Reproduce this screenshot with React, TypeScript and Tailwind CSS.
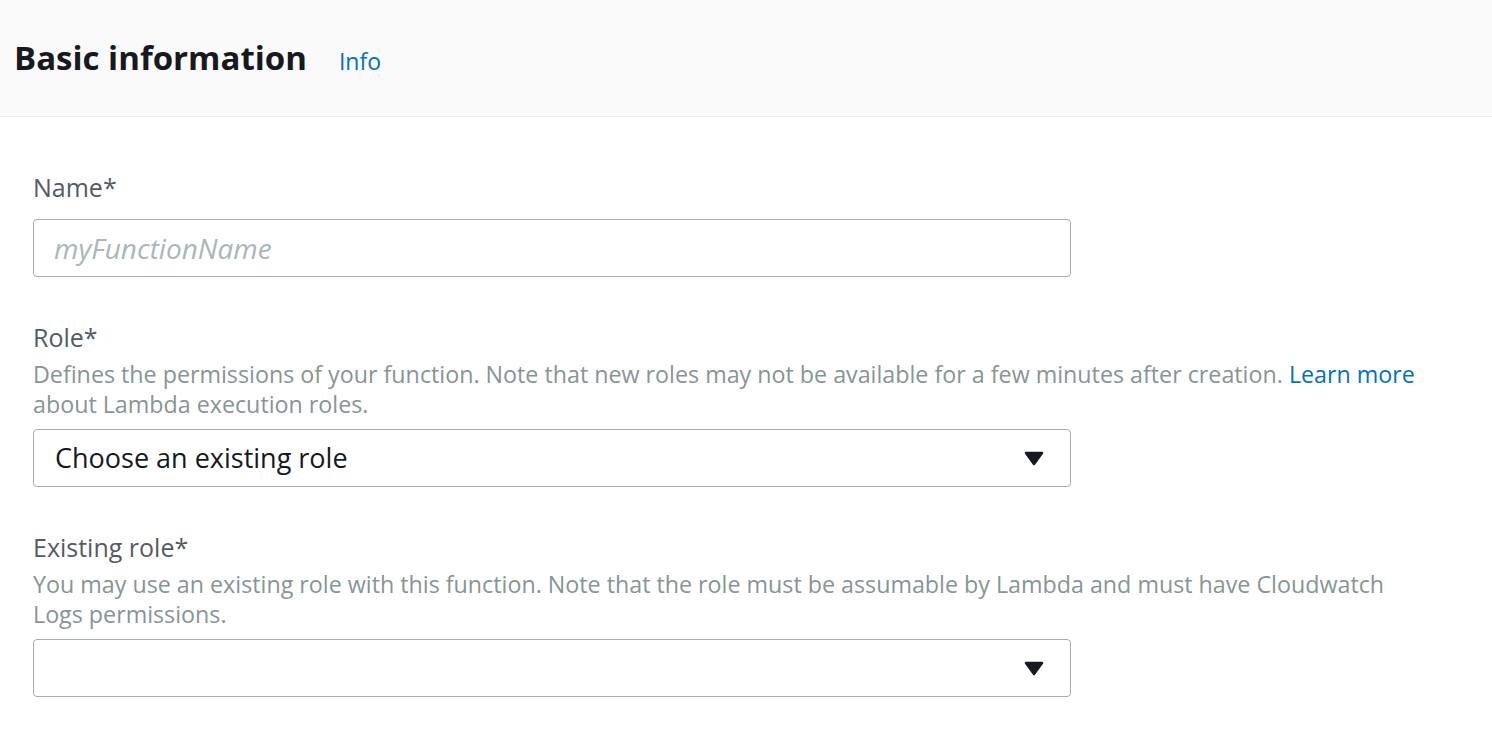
function Caret() {
  return (
    <svg width="20" height="15" viewBox="0 0 20 15" className="shrink-0">
      <path d="M2 2 L18 2 L10 13 Z" fill="#16191f" stroke="#16191f" strokeWidth="2.5" strokeLinejoin="round" />
    </svg>
  )
}

function Field({
  label,
  hint,
  children,
}: {
  label: string
  hint?: React.ReactNode
  children: React.ReactNode
}) {
  return (
    <div className="flex flex-col">
      <label className="text-[25px] leading-[24px] text-[#545b64]">{label}</label>
      {hint && <p className="mt-[10px] text-[23.25px] leading-[30px] text-[#879596]">{hint}</p>}
      <div className={hint ? 'mt-[10px]' : 'mt-5'}>{children}</div>
    </div>
  )
}

function Select({ value }: { value?: string }) {
  return (
    <div className="flex h-[58px] w-[1038px] items-center justify-between rounded-[4px] border border-[#a3afb0] bg-white pl-[21px] pr-[26px]">
      <span className="text-[27px] text-[#16191f]">{value}</span>
      <Caret />
    </div>
  )
}

export default function App() {
  return (
    <div className="min-h-screen bg-white font-['Open_Sans',sans-serif] antialiased">
      <header className="flex h-[117px] items-center border-b border-[#eaeded] bg-[#fafafa] pl-[14px]">
        <div className="flex items-baseline gap-8">
          <h2 className="text-[33px] font-bold leading-[40px] text-[#16191f]">Basic information</h2>
          <a href="#" className="text-[23px] text-[#0073bb]">
            Info
          </a>
        </div>
      </header>

      <div className="flex flex-col gap-[48px] pl-[33px] pt-[58px]">
        <Field label="Name*">
          <input
            placeholder="myFunctionName"
            className="h-[58px] w-[1038px] rounded-[4px] border border-[#a3afb0] bg-white px-[20px] text-[28px] italic text-[#16191f] outline-none placeholder:text-[#aab7b8]"
          />
        </Field>

        <Field
          label="Role*"
          hint={
            <>
              Defines the permissions of your function. Note that new roles may not be available for a few minutes after
              creation.{' '}
              <a href="#" className="text-[#0073bb]">
                Learn more
              </a>
              <br />
              about Lambda execution roles.
            </>
          }
        >
          <Select value="Choose an existing role" />
        </Field>

        <Field
          label="Existing role*"
          hint={
            <>
              You may use an existing role with this function. Note that the role must be assumable by Lambda and must
              have Cloudwatch
              <br />
              Logs permissions.
            </>
          }
        >
          <Select />
        </Field>
      </div>
    </div>
  )
}
